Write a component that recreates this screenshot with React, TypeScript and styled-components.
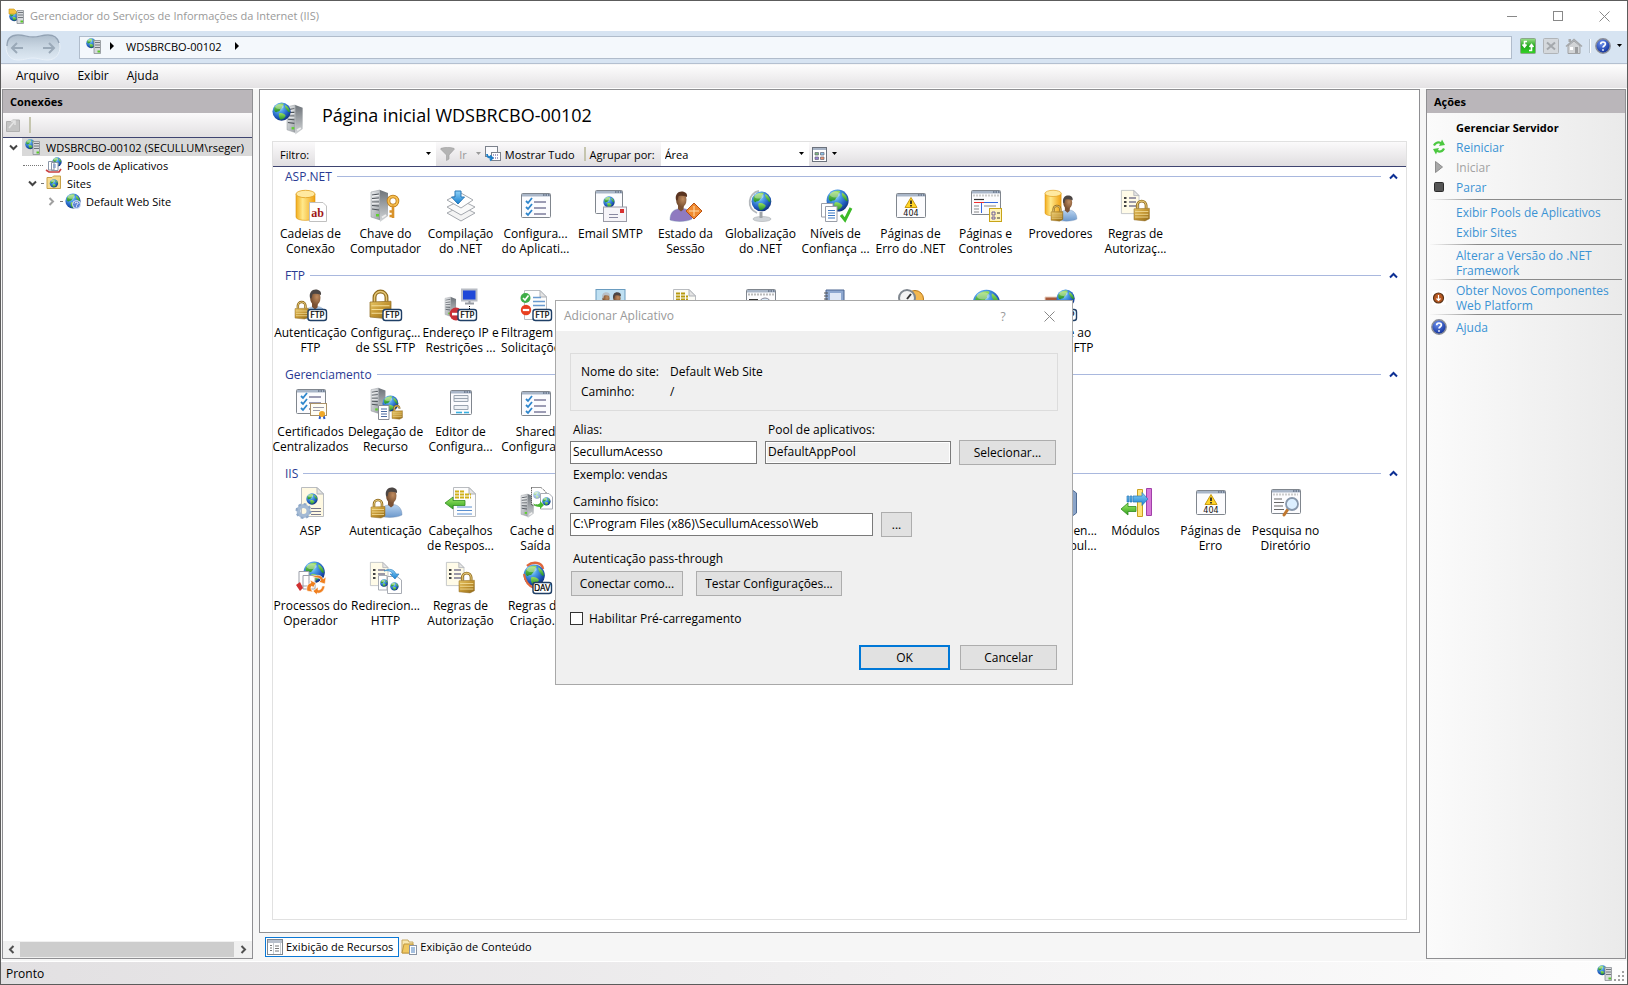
import React from "react";
import styled, { createGlobalStyle } from "styled-components";

const FONT = '"Open Sans", "Segoe UI", sans-serif';

const GlobalStyle = createGlobalStyle`
  *, *::before, *::after { box-sizing: border-box; }
  body { margin: 0; font: 12px/15px ${FONT}; color: #000; background: #f6f6f6; }
  button, input, select { font: inherit; color: inherit; border-radius: 0; margin: 0; }
  button { background: none; border: 0; padding: 0; }
  ul { list-style: none; margin: 0; padding: 0; }
  h1, h2, h3, p { margin: 0; font: inherit; }
  svg { display: block; flex: none; overflow: visible; }
`;

/* ---------- icon primitives ---------- */

const Defs = () => (
  <HiddenSvg width="0" height="0" aria-hidden="true">
    <defs>
      <radialGradient id="ocean" cx="38%" cy="28%" r="75%">
        <stop offset="0" stopColor="#b4e4ff" />
        <stop offset="0.35" stopColor="#4a9be6" />
        <stop offset="0.75" stopColor="#1c55b8" />
        <stop offset="1" stopColor="#123078" />
      </radialGradient>
      <linearGradient id="land" x1="0" y1="0" x2="0" y2="1">
        <stop offset="0" stopColor="#9be05c" />
        <stop offset="1" stopColor="#1f8f2c" />
      </linearGradient>
      <linearGradient id="steel" x1="0" y1="0" x2="1" y2="1">
        <stop offset="0" stopColor="#eceef0" />
        <stop offset="1" stopColor="#9a9fa4" />
      </linearGradient>
      <linearGradient id="steelSide" x1="0" y1="0" x2="0" y2="1">
        <stop offset="0" stopColor="#6d7379" />
        <stop offset="1" stopColor="#d4d7d9" />
      </linearGradient>
      <linearGradient id="gold" x1="0" y1="0" x2="1" y2="0">
        <stop offset="0" stopColor="#f2ad1c" />
        <stop offset="0.35" stopColor="#ffe98c" />
        <stop offset="1" stopColor="#f0a010" />
      </linearGradient>
      <linearGradient id="brass" x1="0" y1="0" x2="1" y2="1">
        <stop offset="0" stopColor="#e8c766" />
        <stop offset="0.5" stopColor="#c29430" />
        <stop offset="1" stopColor="#8f6818" />
      </linearGradient>
      <linearGradient id="blueArrow" x1="0" y1="0" x2="0" y2="1">
        <stop offset="0" stopColor="#8fd2f8" />
        <stop offset="1" stopColor="#1880d0" />
      </linearGradient>
      <linearGradient id="greenArrow" x1="0" y1="0" x2="0" y2="1">
        <stop offset="0" stopColor="#a4ec6a" />
        <stop offset="1" stopColor="#2fa01c" />
      </linearGradient>
      <radialGradient id="skin" cx="65%" cy="45%" r="70%">
        <stop offset="0" stopColor="#c08c60" />
        <stop offset="1" stopColor="#6a4428" />
      </radialGradient>
      <linearGradient id="shirt" x1="0" y1="0" x2="0" y2="1">
        <stop offset="0" stopColor="#b9d4f0" />
        <stop offset="1" stopColor="#6c98cc" />
      </linearGradient>
      <radialGradient id="help" cx="40%" cy="30%" r="70%">
        <stop offset="0" stopColor="#6d92f0" />
        <stop offset="1" stopColor="#10309a" />
      </radialGradient>
      <linearGradient id="refresh" x1="0" y1="0" x2="0" y2="1">
        <stop offset="0" stopColor="#9be08a" />
        <stop offset="0.5" stopColor="#22a81e" />
        <stop offset="1" stopColor="#35d428" />
      </linearGradient>
      <linearGradient id="nav" x1="0" y1="0" x2="0" y2="1">
        <stop offset="0" stopColor="#aebdcc" />
        <stop offset="0.5" stopColor="#cbd8e4" />
        <stop offset="1" stopColor="#dfeaf4" />
      </linearGradient>
    </defs>
  </HiddenSvg>
);

type Spot = { x?: number; y?: number; s?: number };
const at = ({ x = 0, y = 0, s = 1 }: Spot) => `translate(${x} ${y}) scale(${s})`;

const Globe = (p: Spot) => (
  <g transform={at(p)}>
    <circle cx="8" cy="8" r="7.6" fill="url(#ocean)" />
    <path d="M2.2 4.4C4 1.8 7 .9 9.6 1.4 10 2.6 8.6 3 8.2 4.2 9 5.2 7 5.6 6.6 7 5.8 8.4 4.4 7.4 3.6 8.6 2 8.4 1.4 6 2.2 4.4Z" fill="url(#land)" />
    <path d="M11 2.4C13.6 3.8 15 6 14.9 8.4 13.8 8.8 13 7.6 12.4 6.6 11.4 5.8 10.6 4 11 2.4Z" fill="url(#land)" />
    <path d="M6 9.4C8 8.8 10.4 9.8 11.4 11.4 10.8 13 9 14.6 7 14.8 6.2 13.4 5 11.4 6 9.4Z" fill="url(#land)" />
    <ellipse cx="6.2" cy="3.8" rx="3.6" ry="2" fill="#fff" opacity=".35" />
  </g>
);

const Tower = (p: Spot) => (
  <g transform={at(p)}>
    <path d="M0 2 9 0 9 30 0 27Z" fill="url(#steel)" stroke="#8b9096" strokeWidth=".5" />
    <path d="M9 0 17 3 17 26 9 32Z" fill="url(#steelSide)" />
    <path d="M1 5 8 4M1 8.500 8 8M1 12 8 12M1 15.500 8 16M1 19 8 20" stroke="#4e545a" strokeWidth="1.2" />
    <path d="M1 6.200 8 5.200M1 9.700 8 9.200M1 13.200 8 13.200" stroke="#fff" strokeWidth=".8" />
    <path d="M11 27.500 15 25" stroke="#eee" strokeWidth="2" />
    <rect x="5" y="24" width="3" height="2.500" fill="#5fd030" />
  </g>
);

const Page = ({ tint = "#fdfdfd", ...p }: Spot & { tint?: string }) => (
  <g transform={at(p)}>
    <path d="M.5.5H16L22.500 7V29.500H.5Z" fill={tint} stroke="#b9bcc0" />
    <path d="M16 .5V7H22.500Z" fill="#e4e4e4" stroke="#b0b3b8" />
  </g>
);

const Bullets = (p: Spot) => (
  <g transform={at(p)} strokeWidth="1.5">
    <path d="M0 1h2.500M0 5h2.500M0 9h2.500" stroke="#444" strokeWidth="2.200" />
    <path d="M5 1h7M5 5h7M5 9h7" stroke="#7b7890" />
  </g>
);

const Win = ({ w = 30, h = 25, ...p }: Spot & { w?: number; h?: number }) => (
  <g transform={at(p)}>
    <rect x=".5" y=".5" width={w - 1} height={h - 1} rx="1" fill="#fcfcfe" stroke="#80868e" />
    <rect x="1" y="1" width={w - 2} height="2.500" fill="#a9b6c8" />
    <path d={`M${w - 8} 2h1.500M${w - 5.5} 2h1.500M${w - 3} 2h1.500`} stroke="#3c4a60" strokeWidth="1.200" />
  </g>
);

const Padlock = ({ open, ...p }: Spot & { open?: boolean }) => (
  <g transform={at(p)}>
    <path d={open ? "M3 8V4.500a3.500 3.500 0 0 1 7 0V5" : "M3 8V5a4 4 0 0 1 8 0V8"} fill="none" stroke="#8f6a1c" strokeWidth="2.600" />
    <path d={open ? "M3 8V4.500a3.500 3.500 0 0 1 7 0V5" : "M3 8V5a4 4 0 0 1 8 0V8"} fill="none" stroke="#e6c878" strokeWidth="1" />
    <path d="M0 8 14 7.500 14 17 10 19 0 18Z" fill="url(#brass)" stroke="#94702a" strokeWidth=".5" />
    <path d="M1 10.500H13M1 13H13M1 15.500H13" stroke="#f3dd98" strokeWidth=".8" />
  </g>
);

const Person = ({ shirt = "url(#shirt)", hair = "#4c4644", ...p }: Spot & { shirt?: string; hair?: string }) => (
  <g transform={at(p)}>
    <path d="M0 29C0 21 4 18 11 17.500S22 21 22 28C17 31 5 31 0 29Z" fill={shirt} stroke="#6a86ac" strokeWidth=".4" />
    <path d="M8 13 14 13 13.500 18.500 11 20.500 8 18Z" fill="#7c5234" />
    <ellipse cx="11.300" cy="8.800" rx="5.200" ry="7.200" fill="url(#skin)" />
    <path d="M6 9C4.800 3.500 8 .5 11.500 .5 15.500 .5 17.600 2.800 17 6 14 4.600 11 4.600 8.500 5.200L7.500 9.500Z" fill={hair} />
  </g>
);

const Ftp = ({ text = "FTP" }: { text?: string }) => (
  <g>
    <rect x="13" y="20.500" width="18.500" height="11" rx="2.500" fill="#fff" stroke="#1f3f66" strokeWidth="1.400" />
    <text x="22.300" y="29.200" fontSize="8" fontWeight="400" textAnchor="middle" fontFamily="DejaVu Sans, sans-serif" fill="#000" stroke="#000" strokeWidth=".2">{text}</text>
  </g>
);

const Checks = (p: Spot) => (
  <g transform={at(p)} fill="none">
    <path d="M0 3 2 5 6 0M0 9 2 11 6 6M0 15 2 17 6 12" stroke="#2f86cc" strokeWidth="1.800" />
    <path d="M8 4H20M8 10H20M8 16H20" stroke="#7c7c9c" strokeWidth="1.300" />
  </g>
);

const WarnPage = () => (
  <g>
    <Win x={1} y={3} />
    <path d="M16 7.500 22 17.500H10Z" fill="#ffd428" stroke="#c89a10" strokeLinejoin="round" />
    <path d="M16 10.500V14M16 15V16.500" stroke="#222" strokeWidth="1.700" />
    <text x="16" y="26" fontSize="8" textAnchor="middle" fontFamily="DejaVu Sans, sans-serif" fill="#111">404</text>
  </g>
);

const Rules = () => (
  <g>
    <g transform="translate(1 0) scale(.8)"><Page tint="#fffbe8" /></g>
    <Bullets x={4} y={7} />
    <Padlock x={14} y={10} s={1.1} />
  </g>
);

const Cylinder = (p: Spot) => (
  <g transform={at(p)}>
    <path d="M0 4V27C0 31.500 19 31.500 19 27V4Z" fill="url(#gold)" stroke="#d99310" strokeWidth=".6" />
    <ellipse cx="9.500" cy="4" rx="9.500" ry="3.700" fill="#ffe9a0" stroke="#e0a020" strokeWidth=".8" />
  </g>
);

const art: Record<string, React.ReactNode> = {
  db: (
    <g>
      <Cylinder x={1} />
      <path d="M14.500 12.500H28L31.500 16V31.500H14.500Z" fill="#fff" stroke="#c0c0c0" />
      <text x="22.500" y="26.500" fontSize="12" fontWeight="700" textAnchor="middle" fontFamily="Liberation Serif, serif" fill="#a01818">ab</text>
    </g>
  ),
  key: (
    <g>
      <Tower x={1} y={0} />
      <circle cx="23" cy="11" r="4.500" fill="none" stroke="#b87818" strokeWidth="3.600" />
      <circle cx="23" cy="11" r="4.500" fill="none" stroke="#f8c050" strokeWidth="2" />
      <path d="M23 15.500V28M23 21.500h-3.500M23 26h-3.500" stroke="#d8922a" strokeWidth="2.600" />
    </g>
  ),
  compile: (
    <g stroke="#a4a8ae" strokeLinejoin="round">
      <path d="M2 23 16 16 30 23 16 31Z" fill="#f4f4f4" />
      <path d="M2 17 16 10 30 17 16 25Z" fill="#fafafa" />
      <path d="M2 10 16 3 28 10 16 18Z" fill="#fff" />
      <path d="M10 1H16V7H19.500L13 14 6.500 7H10Z" fill="url(#blueArrow)" stroke="#2878b8" />
    </g>
  ),
  checklist: <g><Win x={1} y={3} /><Checks x={6} y={8} /></g>,
  mail: (
    <g>
      <Win x={0} y={0} w={28} h={24} />
      <Globe x={8} y={6} s={0.75} />
      <rect x="8.500" y="17" width="23" height="14.500" fill="#f6f4f8" stroke="#9a9aa6" />
      <rect x="25" y="19" width="4" height="4" fill="#d83030" />
      <path d="M14 24.500h9M14 27.500h9" stroke="#8888a0" />
    </g>
  ),
  session: (
    <g>
      <Person x={0} y={1} shirt="#8f7ac0" hair="#5a3420" />
      <path d="M24 13 32 21 24 29 16 21Z" fill="#f08a30" stroke="#b85010" />
      <path d="M19 21H29M24 16V26" stroke="#ffe0b0" />
    </g>
  ),
  globeStand: (
    <g>
      <ellipse cx="17" cy="29" rx="9" ry="2.500" fill="#d0d4d8" stroke="#a8acb0" strokeWidth=".6" />
      <path d="M16 22V28" stroke="#a0a4a8" strokeWidth="3" />
      <path d="M14 1C3 3 1 18 12 23" fill="none" stroke="#b4b8bc" strokeWidth="1.800" />
      <Globe x={6} y={1} s={1.3} />
    </g>
  ),
  trust: (
    <g>
      <Globe x={6} y={-1} s={1.45} />
      <path d="M1.500 13.500H13V27H1.500Z" fill="#fff" stroke="#9a9ea8" />
      <path d="M5.500 16.500H17V31.500H5.500Z" fill="#fff" stroke="#9a9ea8" />
      <path d="M8 20.500h7M8 23h7M8 25.500h7M8 28h7" stroke="#3b78c4" />
      <path d="M21 25 25 30 31 18" fill="none" stroke="#3cba28" strokeWidth="3" />
    </g>
  ),
  error: <WarnPage />,
  controls: (
    <g>
      <Win x={1} y={0} />
      <path d="M3 5.500H29" stroke="#ccc" strokeWidth="2" strokeDasharray="2 1" />
      <path d="M4 9.500h10" stroke="#333" strokeWidth="1.200" />
      <path d="M4 12.500h10" stroke="#f03030" /><path d="M14 12.500h14M11.500 13v10" stroke="#3468e0" />
      <path d="M4 16h5M4 19h5M4 22h5M14 16h12" stroke="#888" />
      <rect x="19.500" y="18.500" width="12" height="13" fill="#fff3b8" stroke="#c8a418" />
      <path d="M22 22h3v3h-3zM22 27h3v2h-3z" fill="none" stroke="#70609a" /><path d="M27 23h3M27 28h3" stroke="#333" />
    </g>
  ),
  providers: <g><Cylinder x={0} s={0.85} /><Person x={13} y={5} s={0.86} /><Padlock x={6} y={15} s={0.85} /></g>,
  rules: <Rules />,
  authFtp: <g><Person x={9} y={0} /><Padlock x={0} y={12} s={0.95} /><Ftp /></g>,
  sslFtp: <g><Padlock x={0} y={1} s={1.5} /><Ftp /></g>,
  ipFtp: (
    <g>
      <Tower x={0} y={8} s={0.65} />
      <rect x="17" y=".5" width="14.500" height="11" fill="#2048d8" stroke="#b8bcc4" strokeWidth="2" />
      <path d="M20 14.500H29M24.500 12V14" stroke="#989ca4" strokeWidth="2" /><path d="M24.500 17V20" stroke="#000" strokeDasharray="1 1" />
      <circle cx="11" cy="25" r="6.500" fill="#c83038" /><rect x="7" y="23.800" width="7" height="2.600" fill="#fff" />
      <Ftp />
    </g>
  ),
  filterFtp: (
    <g>
      <g transform="translate(4 1)"><Page /></g>
      <path d="M13 8.500h8M13 12.500h12M13 16.500h12" stroke="#6a9ad0" strokeWidth="1.300" />
      <circle cx="5.500" cy="9" r="5" fill="#3fae48" /><path d="M3 9 5 11 8.500 6.500" fill="none" stroke="#fff" strokeWidth="1.600" />
      <circle cx="6" cy="21" r="5.200" fill="#e84020" /><rect x="2.800" y="19.900" width="6.400" height="2.200" fill="#fff" />
      <Ftp />
    </g>
  ),
  isolation: <g><rect x="1" y=".5" width="29" height="24" fill="#bfe0f2" stroke="#6a9cc0" /><Person x={3} y={3} s={0.7} shirt="#ddd" hair="#b8c0c8" /><Person x={14} y={3} s={0.7} /></g>,
  messages: <g><Page x={3} tint="#fbfbf6" /><path d="M6 4.500h9M6 7.500h12M6 10.500h12" stroke="#b89a10" strokeWidth="1.800" strokeDasharray="4 1" /></g>,
  log: <g><Win x={1} /><path d="M3 5.500H29" stroke="#bbb" strokeWidth="2" strokeDasharray="2 1" /><circle cx="20" cy="15" r="6" fill="#dcecf8" stroke="#889" /><path d="M4 11h9" stroke="#333" strokeWidth="2" /></g>,
  book: <g><path d="M6 1H24V30H6Z" fill="#8ea8d0" stroke="#4a6490" /><path d="M10 4H21V13H10Z" fill="#dfe8f6" /><path d="M4 4h4M4 7h4M4 10h4" stroke="#555" /></g>,
  sessions: <g><circle cx="20" cy="10" r="8.500" fill="#f4b850" stroke="#b87818" /><circle cx="12" cy="9" r="8" fill="#f4f4f4" stroke="#808890" strokeWidth="2" /><path d="M12 10 16 5" stroke="#333" strokeWidth="2" /></g>,
  site: <Globe x={2} y={0} s={1.8} />,
  firewall: <g><path d="M0 8H20V20H0Z" fill="#a85a3c" stroke="#e8d0c0" /><Globe x={11} y={0} s={1.2} /><Ftp /></g>,
  certs: (
    <g>
      <Win x={1} y={1} /><Checks x={6} y={5} />
      <rect x="15.500" y="15.500" width="16" height="12" fill="#fffdf4" stroke="#a89068" /><path d="M18 19.500h11M18 22.500h7" stroke="#9a9aa8" />
      <path d="M25.500 27 24.500 31M28.500 27 29.500 31" stroke="#2c5cc8" strokeWidth="2" /><circle cx="27" cy="26" r="3" fill="#f0a828" />
    </g>
  ),
  delegate: (
    <g>
      <Tower x={1} y={0} s={0.85} /><Globe x={12} y={7} s={1.05} />
      <path d="M8.500 17.500H19V31.500H8.500Z" fill="#fff" stroke="#888c94" /><path d="M11 21h6M11 23.500h6M11 26h6M11 28.500h6" stroke="#4a6aa0" />
      <Padlock open x={22} y={17} s={0.75} />
    </g>
  ),
  editor: (
    <g>
      <Win x={5} y={2} w={22} h={25} />
      <path d="M9 7.500h14v6h-14zM9 17.500h14v4h-14z" fill="#eef1f5" stroke="#9aa4b0" /><path d="M9 10.500h14" stroke="#9aa4b0" />
      <path d="M11 24.500h6" stroke="#38b0e0" strokeWidth="1.600" /><path d="M19 24.500h5" stroke="#38b0e0" strokeWidth="1.600" />
    </g>
  ),
  asp: (
    <g>
      <Page x={6} y={0} tint="#fff9e2" /><Globe x={11} y={6} s={0.75} />
      <path d="M16 21.500h10M16 24.500h10M16 27.500h10" stroke="#77778c" />
      <circle cx="8.500" cy="24" r="5" fill="none" stroke="#a4bad4" strokeWidth="4" /><circle cx="8.500" cy="24" r="7" fill="none" stroke="#8ea8c8" strokeWidth="2" strokeDasharray="2.750 2.750" />
    </g>
  ),
  auth: <g><Person x={10} y={0} /><Padlock x={1} y={12} s={1} /></g>,
  headers: (
    <g>
      <Page x={8} /><path d="M10 4.500h9M10 7.500h16M10 10.500h16" stroke="#d0b018" strokeWidth="2" strokeDasharray="4 1" /><path d="M12 20h15M12 23.500h15M12 27h15" stroke="#5a8fd0" />
      <path d="M0 16 8 10V13.500H20V18.500H8V22Z" fill="url(#greenArrow)" stroke="#2f8a20" strokeWidth=".8" />
    </g>
  ),
  cache: (
    <g>
      <Tower x={1} y={7} s={0.75} />
      <path d="M11.500 .5H21L26 5V18H11.500Z" fill="#fff" stroke="#333" strokeDasharray="1 1" /><g opacity=".45"><Globe x={13} y={4} s={0.5} /></g>
      <path d="M20.500 6.500H29L32.500 10V22H20.500Z" fill="#fff" stroke="#a8acb4" /><Globe x={22} y={10} s={0.55} />
      <path d="M13 16C15 18 18 18 20 16V14L24 18 20 22V20C17 20 14 19 13 16Z" fill="#48b830" />
    </g>
  ),
  workers: (
    <g>
      <Globe x={8} y={-1} s={1.4} />
      <path d="M4 9.500H14V24H4ZM8 13.500H20V27H8Z" fill="#fff" stroke="#9a9ea8" />
      <path d="M1 23 5 20 8 26 5 29Z" fill="#d03030" />
      <path d="M17 15C22 12 27 13 28 17L31 15 30 22 24 20 26 18C24 15 20 16 17 15ZM30 24C29 29 26 32 22 31L22 33 18 29 23 25 23 28C26 28 27 26 27 24ZM12 29C11 25 13 21 16 21L15 18 21 21 18 26 17 24C15 25 16 28 18 30Z" fill="#f08020" stroke="#fff" strokeWidth=".6" />
    </g>
  ),
  redirect: (
    <g>
      <g transform="scale(.8)"><Page tint="#fffbe8" /></g><Bullets x={3} y={7} />
      <path d="M8.500 13.500H17V28H8.500Z M17.500 14.500H27L31.500 18V31.500H17.500Z" fill="#fff" stroke="#a8acb4" />
      <Globe x={10} y={17} s={0.5} /><Globe x={20} y={20} s={0.55} />
      <path d="M14 9C19 6 24 7 26 12H29L25 17 20 12H23C21 9 18 8 14 9Z" fill="url(#blueArrow)" stroke="#2878b8" strokeWidth=".6" />
    </g>
  ),
  webdav: (
    <g>
      <path d="M7 4C13-1 22 0 23 7" fill="none" stroke="#e0683c" strokeWidth="2.500" />
      <Globe x={3} y={2} s={1.4} />
      <path d="M4 12C5 19 9 24 14 26" fill="none" stroke="#e0683c" strokeWidth="2" />
      <Ftp text="DAV" />
    </g>
  ),
  isapi: <g><path d="M6 4 26 2 31.500 6V26L26 30 6 27Z" fill="#8aa4c8" stroke="#506c94" /></g>,
  modules: (
    <g>
      <path d="M17.500 2.500H22.500V29.500H17.500Z" fill="#ffe478" stroke="#c8a020" /><path d="M26.500 1.500H31.500V28.500H26.500Z" fill="#d878d8" stroke="#a040a8" />
      <path d="M7 9h2v6h-2zM10 9h2v6h-2zM13 9H22V5.500L28 12 22 18.500V15H13Z" fill="url(#blueArrow)" stroke="#2878b8" strokeWidth=".7" />
      <path d="M1 22 8 16V19.500H16V24.500H8V28Z" fill="url(#greenArrow)" stroke="#2f8a20" strokeWidth=".8" />
    </g>
  ),
  browse: (
    <g>
      <Win x={1} y={2} />
      <path d="M3 7.500H28" stroke="#ccc" strokeWidth="2" strokeDasharray="2 1" /><path d="M4 12h8M4 15.500h10M4 19h9M4 22.500h10" stroke="#666" />
      <path d="M18 22 14 28" stroke="#c07830" strokeWidth="3" strokeLinecap="round" /><circle cx="22" cy="17" r="6" fill="#dcefff" stroke="#8898ac" strokeWidth="1.800" />
    </g>
  ),
};

const ServerSmall = ({ folder }: { folder?: boolean }) => (
  <svg width="16" height="16" viewBox="0 0 16 16" aria-hidden="true">
    <Globe s={0.65} y={folder ? 3 : 0} />
    {folder && <path d="M0 1H5L8 4 6 6H0Z" fill="#f4c440" stroke="#c89010" strokeWidth=".6" />}
    <path d="M8 2.500H14.500V15.500H8Z" fill="#d6d9dc" stroke="#8a8f94" strokeWidth=".8" />
    <path d="M9 4.500H14M9 7H14M9 9.500H14" stroke="#666c72" strokeWidth=".9" />
    <rect x="11.500" y="12.500" width="2.500" height="2" fill="#58c828" />
  </svg>
);

const HelpIcon = () => (
  <svg width="16" height="16" viewBox="0 0 16 16" aria-hidden="true">
    <circle cx="8" cy="8" r="7.200" fill="url(#help)" stroke="#8c8f98" strokeWidth="1.400" />
    <path d="M5.700 6.200C5.700 3.300 10.400 3.300 10.400 6 10.400 7.700 8 7.800 8 9.600M8 11.200V12.700" fill="none" stroke="#fff" strokeWidth="1.700" />
  </svg>
);

const Caret = () => (
  <svg width="7" height="4" viewBox="0 0 7 4" aria-hidden="true"><path d="M1 0H6L3.500 3Z" fill="currentColor" /></svg>
);
const Play = () => (
  <svg width="4" height="8" viewBox="0 0 4 8" aria-hidden="true"><path d="M0 0 4 4 0 8Z" fill="#000" /></svg>
);
const Cross = () => (
  <svg width="11" height="11" viewBox="0 0 11 11" aria-hidden="true"><path d="M.5.5 10.500 10.500M10.500.5.5 10.500" stroke="#888" /></svg>
);
const Chevron = ({ dir }: { dir: "up" | "down" | "left" | "right" }) => {
  const turn = { up: 0, right: 90, down: 180, left: 270 }[dir];
  return (
    <svg width="9" height="9" viewBox="0 0 9 9" aria-hidden="true">
      <path d="M1 6.500 4.500 3 8 6.500" transform={`rotate(${turn} 4.500 4.500)`} fill="none" stroke="currentColor" strokeWidth="2" />
    </svg>
  );
};

/* ---------- window frame ---------- */

const HiddenSvg = styled.svg`position: absolute;`;

const Frame = styled.div`
  display: flex; flex-direction: column; min-height: 100vh;
  border: 1px solid #5c5c5c; background: #f6f6f6;
`;
const TitleBar = styled.header`
  display: flex; align-items: center; height: 30px; padding-left: 8px;
  background: #fff; color: #999; font-size: 11px;
`;
const TitleText = styled.h1`flex: 1; padding: 0 0 2px 5px; white-space: nowrap;`;
const CaptionButton = styled.button`width: 46px; height: 28px; display: grid; place-items: center;`;

const NavBar = styled.nav`
  display: flex; align-items: center; height: 33px; padding: 0 4px; background: #d7e4f2;
  border-bottom: 1px solid #b4c0d0; margin-bottom: 1px;
`;
const NavButtons = styled.div`width: 74px;`;
const Address = styled.div`
  flex: 1; display: flex; align-items: center; height: 23px; padding: 0 6px 2px 6px;
  background: #f4f8fc; border: 1px solid #b0bccb; margin-right: 8px; font-size: 11px;
`;
const Crumb = styled.span`margin: 0 13px 0 12px;`;
const Spread = styled.span`margin-left: 8px; display: flex;`;
const NavTools = styled.div`display: flex; align-items: center; gap: 7px; padding-bottom: 2px;`;
const ToolLine = styled.span`width: 2px; height: 14px; background: #fff; border-left: 1px solid #b8c4d0; margin-right: -3px;`;
const IconButton = styled.button`display: flex; align-items: center; gap: 5px;`;

const MenuBar = styled.div`
  display: flex; align-items: center; gap: 18px; height: 24px; padding: 0 0 2px 15px;
  background: linear-gradient(#fdfdfd, #e4e2e4); border-bottom: 1px solid #fff;
`;

const Body = styled.main`
  flex: 1; display: grid; grid-template-columns: 251px minmax(0, 1fr) 200px; column-gap: 6px;
  padding: 0 1px 2px 1px; background: #f6f6f6;
`;
const PaneTitle = styled.h2`
  height: 23px; padding: 0 7px; line-height: 23px; font-weight: 700; font-size: 11px; background: #bab6ba;
`;

/* ---------- connections ---------- */

const SidePane = styled.section`display: flex; flex-direction: column; border: 1px solid #8f8f92; background: #fff; min-width: 0;`;
const PaneTools = styled.div`
  display: flex; align-items: center; gap: 9px; height: 25px; padding: 0 3px;
  background: linear-gradient(#fbfafb, #e2e0e2); border-bottom: 1px solid #3e4470;
`;
const PaneDivider = styled.span`width: 2px; height: 16px; background: #c5c5ae;`;
const Tree = styled.ul`flex: 1; font-size: 11px;`;
const TreeRow = styled.li<{ $level: number }>`
  display: flex; align-items: center; height: 18px; padding-left: ${(p) => p.$level * 19 + 1}px; white-space: nowrap;
`;
const Expander = styled.button<{ $dim?: boolean }>`
  width: 18px; height: 18px; display: grid; place-items: center; color: ${(p) => (p.$dim ? "#a0a0a0" : "#444")};
`;
const Dots = styled.span<{ $w: number }>`width: ${(p) => p.$w}px; height: 0; border-top: 1px dotted #777;`;
const TreeLabel = styled.button<{ $on?: boolean }>`
  flex: ${(p) => (p.$on ? "1" : "none")}; min-width: 0; display: flex; align-items: center; gap: 5px; height: 18px; padding-left: 3px;
  background: ${(p) => (p.$on ? "#d9d9d9" : "none")};
`;
const ScrollBar = styled.div`
  display: flex; align-items: center; height: 17px; padding: 0 4px; color: #505050; background: #f0f0f0;
`;
const Thumb = styled.div`flex: 1; height: 15px; margin: 0 5px 0 4px; background: #cdcdcd;`;

/* ---------- centre ---------- */

const Centre = styled.section`display: flex; flex-direction: column; min-width: 0;`;
const HomePane = styled.div`
  flex: 1; display: flex; flex-direction: column; padding: 7px 12px 12px 12px;
  border: 1px solid #8f8f92; background: #fff;
`;
const PageHead = styled.div`display: flex; align-items: center; gap: 18px; height: 42px; margin-bottom: 2px;`;
const PageTitle = styled.h2`font-size: 18px; line-height: 24px; padding-bottom: 6px;`;
const Features = styled.div`flex: 1; border: 1px solid #e1e1e1;`;
const FilterBar = styled.div`
  display: flex; align-items: center; height: 25px; padding-left: 7px; font-size: 11px;
  background: linear-gradient(#fbfafb, #e0dee0); border-bottom: 1px solid #3e4470;
`;
const Combo = styled.label<{ $w: number }>`
  display: flex; align-items: center; width: ${(p) => p.$w}px; height: 24px; padding-right: 4px; margin-left: 6px; background: #fff;
`;
const ComboInput = styled.input`flex: 1; min-width: 0; border: 0; outline: 0; background: none; padding: 0 4px;`;
const ComboSelect = styled.select`flex: 1; min-width: 0; appearance: none; border: 0; outline: 0; background: none; padding: 0 4px;`;
const BarButton = styled.button<{ $left?: number; $dim?: boolean }>`
  display: flex; align-items: center; gap: 4px; margin-left: ${(p) => p.$left ?? 0}px;
  color: ${(p) => (p.$dim ? "#9a9a9a" : "#000")}; white-space: nowrap;
`;
const BarLabel = styled.span`white-space: nowrap;`;
const BarDivider = styled(PaneDivider)`height: 14px; margin: 0 4px 0 9px;`;

const Group = styled.section`padding: 0 25px 1px 0;`;
const GroupHead = styled.header`
  display: flex; align-items: center; height: 18px; gap: 5px; padding-left: 12px; margin: 0 -17px 5px 0; color: #2a3b93;
`;
const Rule = styled.span`flex: 1; height: 1px; background: #a9b8de; margin-right: 3px;`;
const Fold = styled.button`color: #0d2f93;`;
const Tiles = styled.div`display: grid; grid-template-columns: repeat(auto-fill, 75px);`;
const TileBox = styled.button<{ $col?: number }>`
  grid-column-start: ${(p) => p.$col ?? "auto"}; display: flex; flex-direction: column; align-items: center;
  height: 75px; gap: 4px; white-space: nowrap;
`;
const TileLine = styled.span`display: block;`;

const ViewTabs = styled.div`display: flex; align-items: center; height: 26px; padding-left: 6px;`;
const ViewTab = styled.button<{ $on?: boolean }>`
  display: flex; align-items: center; gap: 3px; height: 20px; padding: 0 5px 0 1px; margin-top: 1px; font-size: 11px;
  border: 1px solid ${(p) => (p.$on ? "#0a78d6" : "transparent")}; background: ${(p) => (p.$on ? "#fff" : "none")};
`;

/* ---------- actions ---------- */

const ActionPane = styled(SidePane)`background: linear-gradient(90deg, #fbfbfb, #eaeaea);`;
const ActionList = styled.div`padding: 5px 3px 0 3px;`;
const ActionBlock = styled.div`
  padding-bottom: 1px; margin-bottom: 3px; border-bottom: 1px solid;
  border-image: linear-gradient(90deg, transparent, #8a8a8a 25%) 1;
  &:last-child { border: 0; }
`;
const ActionRow = styled.div<{ $tall?: boolean }>`
  display: grid; grid-template-columns: 18px 1fr; column-gap: 8px; align-items: center;
  justify-items: start; height: ${(p) => (p.$tall ? 30 : 20)}px; padding-bottom: 2px;
`;
const ActionLink = styled.a`color: #3b93d4; text-decoration: none;`;
const ActionOff = styled.span`color: #a2a2a2;`;
const ActionTitle = styled.h3`font-weight: 700; font-size: 11px;`;
const IconCell = styled.span`width: 18px; display: grid; place-items: center;`;

const StatusBar = styled.footer`
  display: flex; align-items: center; justify-content: space-between; height: 23px; padding: 0 2px 0 5px;
  border-top: 1px solid #fff; background: linear-gradient(90deg, #e2e0e2, #fdfdfd);
`;
const StatusIcons = styled.span`display: flex; align-items: flex-end;`;

/* ---------- dialog ---------- */

const Overlay = styled.div`position: absolute; inset: 0; display: grid; place-items: center;`;
const Dialog = styled.form`width: 518px; border: 1px solid #a8a8a8; background: #f0f0f0;`;
const DialogTitle = styled.header`
  display: flex; align-items: center; height: 30px; padding-left: 3px; background: #fff; color: #999;
`;
const DialogBody = styled.div`padding: 22px 14px 14px 14px; display: flex; flex-direction: column;`;
const SiteInfo = styled.dl`
  display: grid; grid-template-columns: 89px 1fr; row-gap: 4px; margin: 0; height: 58px; padding: 10px;
  border: 1px solid #dcdcdc;
  dt, dd { margin: 0; }
`;
const Fields = styled.div`display: grid; grid-template-columns: 187px 186px 97px; column-gap: 8px; align-items: end; margin-top: 11px;`;
const Field = styled.div`display: flex; flex-direction: column; gap: 4px; padding-bottom: 1px;`;
const FieldLabel = styled.label`padding-left: 3px;`;
const TextBox = styled.input`
  width: 100%; height: 23px; padding: 0 2px 2px 2px; border: 1px solid #7a7a7a; background: #fff; outline: 0;
  &:read-only { background: #f0f0f0; box-shadow: inset 0 0 0 1px #fff; }
`;
const Hint = styled.p`padding-left: 3px; margin-top: 2px;`;
const PathRow = styled.div`display: grid; grid-template-columns: 303px 31px; column-gap: 8px; align-items: end; margin-top: 12px;`;
const PushButton = styled.button<{ $w?: number; $main?: boolean }>`
  width: ${(p) => (p.$w ? p.$w + "px" : "100%")}; height: 25px; background: #e1e1e1;
  border: ${(p) => (p.$main ? "2px solid #0078d7" : "1px solid #adadad")};
`;
const ButtonRow = styled.div<{ $gap: number; $top: number; $end?: boolean }>`
  display: flex; gap: ${(p) => p.$gap}px; margin: ${(p) => p.$top}px 1px 0 1px; justify-content: ${(p) => (p.$end ? "flex-end" : "flex-start")};
`;
const Auth = styled(Hint)`margin-top: 14px;`;
const CheckRow = styled.label`display: flex; align-items: center; gap: 6px; margin-top: 15px;`;
const CheckBox = styled.input`appearance: none; width: 13px; height: 13px; border: 1px solid #333; background: #fff;`;

/* ---------- data ---------- */

type Tile = { icon: string; text?: string[]; col?: number };

const groups: { name: string; tiles: Tile[] }[] = [
  {
    name: "ASP.NET",
    tiles: [
      { icon: "db", text: ["Cadeias de", "Conexão"] },
      { icon: "key", text: ["Chave do", "Computador"] },
      { icon: "compile", text: ["Compilação", "do .NET"] },
      { icon: "checklist", text: ["Configura...", "do Aplicati..."] },
      { icon: "mail", text: ["Email SMTP"] },
      { icon: "session", text: ["Estado da", "Sessão"] },
      { icon: "globeStand", text: ["Globalização", "do .NET"] },
      { icon: "trust", text: ["Níveis de", "Confiança ..."] },
      { icon: "error", text: ["Páginas de", "Erro do .NET"] },
      { icon: "controls", text: ["Páginas e", "Controles"] },
      { icon: "providers", text: ["Provedores"] },
      { icon: "rules", text: ["Regras de", "Autorizaç..."] },
    ],
  },
  {
    name: "FTP",
    tiles: [
      { icon: "authFtp", text: ["Autenticação", "FTP"] },
      { icon: "sslFtp", text: ["Configuraç...", "de SSL FTP"] },
      { icon: "ipFtp", text: ["Endereço IP e", "Restrições ..."] },
      { icon: "filterFtp", text: ["Filtragem de", "Solicitaçõe..."] },
      { icon: "isolation" },
      { icon: "messages" },
      { icon: "log" },
      { icon: "book" },
      { icon: "sessions" },
      { icon: "site" },
      { icon: "firewall", text: ["Suporte ao", "Firewall FTP"] },
    ],
  },
  {
    name: "Gerenciamento",
    tiles: [
      { icon: "certs", text: ["Certificados", "Centralizados"] },
      { icon: "delegate", text: ["Delegação de", "Recurso"] },
      { icon: "editor", text: ["Editor de", "Configura..."] },
      { icon: "checklist", text: ["Shared", "Configurat..."] },
    ],
  },
  {
    name: "IIS",
    tiles: [
      { icon: "asp", text: ["ASP"] },
      { icon: "auth", text: ["Autenticação"] },
      { icon: "headers", text: ["Cabeçalhos", "de Respos..."] },
      { icon: "cache", text: ["Cache de", "Saída"] },
      { icon: "isapi", text: ["Mapeamen...", "de Manipul..."], col: 11 },
      { icon: "modules", text: ["Módulos"] },
      { icon: "error", text: ["Páginas de", "Erro"] },
      { icon: "browse", text: ["Pesquisa no", "Diretório"] },
      { icon: "workers", text: ["Processos do", "Operador"] },
      { icon: "redirect", text: ["Redirecion...", "HTTP"] },
      { icon: "rules", text: ["Regras de", "Autorização"] },
      { icon: "webdav", text: ["Regras de", "Criação..."] },
    ],
  },
];

/* ---------- sections ---------- */

const TitleArea = () => (
  <TitleBar>
    <ServerSmall folder />
    <TitleText>Gerenciador do Serviços de Informações da Internet (IIS)</TitleText>
    <CaptionButton aria-label="Minimizar">
      <svg width="10" height="10" viewBox="0 0 10 10"><path d="M0 5.500H10" stroke="#888" /></svg>
    </CaptionButton>
    <CaptionButton aria-label="Maximizar">
      <svg width="10" height="10" viewBox="0 0 10 10"><rect x=".5" y=".5" width="9" height="9" fill="none" stroke="#888" /></svg>
    </CaptionButton>
    <CaptionButton aria-label="Fechar"><Cross /></CaptionButton>
  </TitleBar>
);

const Navigation = () => (
  <NavBar>
    <NavButtons>
      <svg width="56" height="27" viewBox="0 0 56 27" aria-hidden="true">
        <path d="M13 1C20 1 22 3 28 3S36 1 43 1C51 1 55 7 55 13S51 26 43 26C36 26 34 24 28 24S20 26 13 26C5 26 1 20 1 13S5 1 13 1Z" fill="url(#nav)" stroke="#e8f0f8" />
        <path d="M2 12C2 5 6 1 13 1 20 1 22 3 28 3S36 1 43 1C50 1 53 5 54 9" fill="none" stroke="#92a2b4" strokeWidth="1.400" />
        <path d="M18 14H7M12 9 7 14 12 19M38 14H49M44 9 49 14 44 19" fill="none" stroke="#9aa9b8" strokeWidth="2" />
      </svg>
    </NavButtons>
    <Address>
      <ServerSmall />
      <Spread><Play /></Spread>
      <Crumb>WDSBRCBO-00102</Crumb>
      <Play />
    </Address>
    <NavTools>
      <IconButton aria-label="Atualizar">
        <svg width="16" height="16" viewBox="0 0 16 16">
          <rect x=".5" y=".5" width="15" height="15" rx="1" fill="url(#refresh)" stroke="#8aa88a" />
          <path d="M7 3.500H4.500V8M2.500 6.500 4.500 9 6.500 6.500M9 12.500H11.500V8M9.500 9 11.500 6.500 13.500 9" fill="none" stroke="#fff" strokeWidth="1.600" />
        </svg>
      </IconButton>
      <IconButton aria-label="Parar">
        <svg width="16" height="16" viewBox="0 0 16 16">
          <rect x=".5" y=".5" width="15" height="15" rx="1" fill="#d4d8dc" stroke="#b0b4b8" />
          <path d="M4 4.500 12 11.500M12 4.500 4 11.500" stroke="#a4a8ac" strokeWidth="2" />
        </svg>
      </IconButton>
      <IconButton aria-label="Página inicial">
        <svg width="16" height="16" viewBox="0 0 16 16">
          <path d="M2 8V15.500H14V8L8 3Z" fill="#d2d4d6" stroke="#a0a2a4" />
          <path d="M2.500 1H5V4H2.500Z" fill="#a6a8aa" /><path d="M0 8.500 8 1.500 16 8.500" fill="none" stroke="#a6a8aa" strokeWidth="1.600" />
          <rect x="9" y="9" width="3" height="6" fill="#9a9c9e" /><rect x="4" y="9" width="3" height="3" fill="#fff" />
        </svg>
      </IconButton>
      <ToolLine />
      <IconButton aria-label="Ajuda"><HelpIcon /><Caret /></IconButton>
    </NavTools>
  </NavBar>
);

const Connections = () => (
  <SidePane>
    <PaneTitle>Conexões</PaneTitle>
    <PaneTools>
      <svg width="14" height="16" viewBox="0 0 14 16" aria-hidden="true">
        <path d="M.5 4.500H5L6.500 3H13.500V14.500H.5Z" fill="#c4c4c4" stroke="#b0b0b0" /><path d="M3 11 8 5M5 4H9V8" fill="none" stroke="#e4e4e4" strokeWidth="1.500" />
      </svg>
      <PaneDivider />
    </PaneTools>
    <Tree>
      <TreeRow $level={0}>
        <Expander aria-label="Recolher"><Chevron dir="down" /></Expander>
        <TreeLabel $on><ServerSmall />WDSBRCBO-00102 (SECULLUM\rseger)</TreeLabel>
      </TreeRow>
      <TreeRow $level={1}>
        <Dots $w={20} />
        <TreeLabel>
          <svg width="16" height="16" viewBox="0 0 16 16" aria-hidden="true">
            <Globe x={6} s={0.62} /><path d="M2.500 4.500H8V13H2.500ZM5.500 5.500H12V13.500H5.500Z" fill="#fff" stroke="#8a96a8" />
            <path d="M7 8h3M7 10h3" stroke="#6a8ac0" /><path d="M0 13 3 15H13L15 12" fill="none" stroke="#c84040" strokeWidth="1.600" />
          </svg>
          Pools de Aplicativos
        </TreeLabel>
      </TreeRow>
      <TreeRow $level={1}>
        <Expander aria-label="Recolher"><Chevron dir="down" /></Expander>
        <Dots $w={2} />
        <TreeLabel>
          <svg width="16" height="16" viewBox="0 0 16 16" aria-hidden="true">
            <path d="M1 2.500H6L7.500 1H14.500V13.500H1Z" fill="#f6dc90" stroke="#c8a24a" /><Globe x={3.5} y={4} s={0.55} />
          </svg>
          Sites
        </TreeLabel>
      </TreeRow>
      <TreeRow $level={2}>
        <Expander $dim aria-label="Expandir"><Chevron dir="right" /></Expander>
        <Dots $w={2} />
        <TreeLabel>
          <svg width="16" height="16" viewBox="0 0 16 16" aria-hidden="true">
            <Globe /><circle cx="11.500" cy="11.500" r="4" fill="#5d83d4" stroke="#dde8fa" />
            <path d="M10 10.500C10 8.800 13 8.800 13 10.500 13 11.500 11.500 11.300 11.500 12.500M11.500 13.300V14.300" fill="none" stroke="#fff" />
          </svg>
          Default Web Site
        </TreeLabel>
      </TreeRow>
    </Tree>
    <ScrollBar><Chevron dir="left" /><Thumb /><Chevron dir="right" /></ScrollBar>
  </SidePane>
);

const Filter = () => (
  <FilterBar>
    <BarLabel as="label" htmlFor="filter">Filtro:</BarLabel>
    <Combo $w={121}><ComboInput id="filter" /><Caret /></Combo>
    <BarButton $left={4} $dim>
      <svg width="15" height="14" viewBox="0 0 15 14" aria-hidden="true"><path d="M.5 2C.5 0 14.500 0 14.500 2L9 8V12L6.500 13.500V8Z" fill="#b4b4b4" stroke="#9a9a9a" strokeWidth=".6" /></svg>
      Ir
    </BarButton>
    <BarButton $left={8} $dim aria-label="Opções do filtro"><Caret /></BarButton>
    <BarButton $left={3}>
      <svg width="16" height="16" viewBox="0 0 16 16" aria-hidden="true">
        <rect x=".5" y=".5" width="12" height="10" fill="#fbfbfd" stroke="#7c828c" /><rect x="6.500" y="6.500" width="9" height="8" fill="#fff" stroke="#7c828c" />
        <path d="M8 9h6M8 12h6" stroke="#8880b0" strokeDasharray="1 1" strokeWidth="1.500" /><path d="M2 8C2 11 4 12 7 12M5 9.500 7.500 12 5 14.500" fill="none" stroke="#1f80c8" strokeWidth="1.800" />
      </svg>
      Mostrar Tudo
    </BarButton>
    <BarDivider />
    <BarLabel as="label" htmlFor="groupBy">Agrupar por:</BarLabel>
    <Combo $w={148}>
      <ComboSelect id="groupBy"><option>Área</option></ComboSelect>
      <Caret />
    </Combo>
    <BarButton $left={3} aria-label="Modo de exibição">
      <svg width="15" height="15" viewBox="0 0 15 15" aria-hidden="true">
        <rect x=".5" y=".5" width="14" height="14" fill="#fff" stroke="#6c727c" /><rect x="1" y="1" width="13" height="2" fill="#a8b4c6" />
        <path d="M3 5.500h3.500v2.500H3z" fill="#7cb87c" stroke="#667" strokeWidth=".7" /><path d="M8.500 5.500H12v2.500H8.500z" fill="#8cc4e8" stroke="#667" strokeWidth=".7" />
        <path d="M3 10h3.500v2.500H3z" fill="#9a80d8" stroke="#667" strokeWidth=".7" /><path d="M8.500 10H12v2.500H8.500z" fill="#f0946c" stroke="#667" strokeWidth=".7" />
      </svg>
      <Caret />
    </BarButton>
  </FilterBar>
);

const FeatureTile = ({ icon, text = [], col }: Tile) => (
  <TileBox $col={col}>
    <svg width="32" height="32" viewBox="0 0 32 32" aria-hidden="true">{art[icon]}</svg>
    <span>{text.map((line) => <TileLine key={line}>{line}</TileLine>)}</span>
  </TileBox>
);

const Home = () => (
  <Centre>
    <HomePane>
      <PageHead>
        <svg width="32" height="32" viewBox="0 0 32 32" aria-hidden="true"><Tower x={15} y={3} s={0.92} /><Globe s={1.2} /></svg>
        <PageTitle>Página inicial WDSBRCBO-00102</PageTitle>
      </PageHead>
      <Features>
        <Filter />
        {groups.map((g) => (
          <Group key={g.name}>
            <GroupHead>
              <h3>{g.name}</h3>
              <Rule />
              <Fold aria-label={g.name}><Chevron dir="up" /></Fold>
            </GroupHead>
            <Tiles>{g.tiles.map((t, i) => <FeatureTile key={i} {...t} />)}</Tiles>
          </Group>
        ))}
      </Features>
    </HomePane>
    <ViewTabs>
      <ViewTab $on>
        <svg width="16" height="16" viewBox="0 0 16 16" aria-hidden="true">
          <rect x=".5" y=".5" width="15" height="15" fill="#fff" stroke="#80868e" /><rect x="1" y="1" width="14" height="3" fill="#b8c0cc" />
          <path d="M3 6.500h2M3 9h2M3 11.500h2M8 7h4M8 9.500h4M8 12h4" stroke="#777" /><path d="M6.500 4V15M13.500 4V15" stroke="#c8ccd0" />
        </svg>
        Exibição de Recursos
      </ViewTab>
      <ViewTab>
        <svg width="16" height="16" viewBox="0 0 16 16" aria-hidden="true">
          <path d="M1 1H7L8 3H12V14H1Z" fill="#f8e8b0" stroke="#c8a860" /><path d="M3 5H12V14H1Z" fill="#f0c860" stroke="#c09840" />
          <rect x="8.500" y="6.500" width="7" height="9" fill="#fff" stroke="#8a94a4" /><path d="M10 9h4M10 11h4M10 13h4" stroke="#4a80c0" />
        </svg>
        Exibição de Conteúdo
      </ViewTab>
    </ViewTabs>
  </Centre>
);

const Actions = () => (
  <ActionPane>
    <PaneTitle>Ações</PaneTitle>
    <ActionList>
      <ActionBlock>
        <ActionRow><IconCell /><ActionTitle>Gerenciar Servidor</ActionTitle></ActionRow>
        <ActionRow>
          <IconCell>
            <svg width="12" height="16" viewBox="0 0 12 16" aria-hidden="true">
              <path d="M0 6C2 2 6 1.500 8 3L9 .5 12 6 6 7 7 5C5 4 3 5 2 7ZM12 10C10 14 6 14.500 4 13L3 15.500 0 10 6 9 5 11C7 12 9 11 10 9Z" fill="#4cc840" />
            </svg>
          </IconCell>
          <ActionLink href="#">Reiniciar</ActionLink>
        </ActionRow>
        <ActionRow>
          <IconCell><svg width="8" height="12" viewBox="0 0 8 12" aria-hidden="true"><path d="M.5.5 7.500 6 .5 11.500Z" fill="#a8a8a8" stroke="#8c8c8c" /></svg></IconCell>
          <ActionOff>Iniciar</ActionOff>
        </ActionRow>
        <ActionRow>
          <IconCell><svg width="10" height="10" viewBox="0 0 10 10" aria-hidden="true"><rect x=".5" y=".5" width="9" height="9" rx="1" fill="#555" stroke="#2c2c2c" /></svg></IconCell>
          <ActionLink href="#">Parar</ActionLink>
        </ActionRow>
      </ActionBlock>
      <ActionBlock>
        <ActionRow><IconCell /><ActionLink href="#">Exibir Pools de Aplicativos</ActionLink></ActionRow>
        <ActionRow><IconCell /><ActionLink href="#">Exibir Sites</ActionLink></ActionRow>
      </ActionBlock>
      <ActionBlock>
        <ActionRow $tall><IconCell /><ActionLink href="#">Alterar a Versão do .NET<br />Framework</ActionLink></ActionRow>
      </ActionBlock>
      <ActionBlock>
        <ActionRow $tall>
          <IconCell>
            <svg width="14" height="14" viewBox="0 0 14 14" aria-hidden="true">
              <rect width="14" height="14" fill="#fff" /><circle cx="6.500" cy="7" r="5" fill="#b85820" stroke="#5c3418" strokeWidth="1.200" /><path d="M6.500 4V9M4.500 7.500 6.500 9.500 8.500 7.500" fill="none" stroke="#fff" strokeWidth="1.200" />
            </svg>
          </IconCell>
          <ActionLink href="#">Obter Novos Componentes<br />Web Platform</ActionLink>
        </ActionRow>
      </ActionBlock>
      <ActionBlock>
        <ActionRow><IconCell><HelpIcon /></IconCell><ActionLink href="#">Ajuda</ActionLink></ActionRow>
      </ActionBlock>
    </ActionList>
  </ActionPane>
);

const AddApplication = () => (
  <Overlay>
    <Dialog onSubmit={(e) => e.preventDefault()} aria-label="Adicionar Aplicativo">
      <DialogTitle>
        <TitleText as="h2">Adicionar Aplicativo</TitleText>
        <CaptionButton type="button" aria-label="Ajuda">?</CaptionButton>
        <CaptionButton type="button" aria-label="Fechar"><Cross /></CaptionButton>
      </DialogTitle>
      <DialogBody>
        <SiteInfo>
          <dt>Nome do site:</dt><dd>Default Web Site</dd>
          <dt>Caminho:</dt><dd>/</dd>
        </SiteInfo>
        <Fields>
          <Field>
            <FieldLabel htmlFor="alias">Alias:</FieldLabel>
            <TextBox id="alias" defaultValue="SecullumAcesso" />
          </Field>
          <Field>
            <FieldLabel htmlFor="pool">Pool de aplicativos:</FieldLabel>
            <TextBox id="pool" readOnly defaultValue="DefaultAppPool" />
          </Field>
          <PushButton type="button">Selecionar...</PushButton>
        </Fields>
        <Hint>Exemplo: vendas</Hint>
        <PathRow>
          <Field>
            <FieldLabel htmlFor="path">Caminho físico:</FieldLabel>
            <TextBox id="path" defaultValue="C:\Program Files (x86)\SecullumAcesso\Web" />
          </Field>
          <PushButton type="button">...</PushButton>
        </PathRow>
        <Auth>Autenticação pass-through</Auth>
        <ButtonRow $gap={13} $top={5}>
          <PushButton type="button" $w={112}>Conectar como...</PushButton>
          <PushButton type="button" $w={146}>Testar Configurações...</PushButton>
        </ButtonRow>
        <CheckRow><CheckBox type="checkbox" />Habilitar Pré-carregamento</CheckRow>
        <ButtonRow $gap={10} $top={19} $end>
          <PushButton $w={91} $main>OK</PushButton>
          <PushButton type="button" $w={97}>Cancelar</PushButton>
        </ButtonRow>
      </DialogBody>
    </Dialog>
  </Overlay>
);

export default function App() {
  return (
    <>
      <GlobalStyle />
      <Defs />
      <Frame>
        <TitleArea />
        <Navigation />
        <MenuBar><button>Arquivo</button><button>Exibir</button><button>Ajuda</button></MenuBar>
        <Body>
          <Connections />
          <Home />
          <Actions />
        </Body>
        <StatusBar>
          Pronto
          <StatusIcons>
            <ServerSmall />
            <svg width="12" height="12" viewBox="0 0 12 12" aria-hidden="true">
              <path d="M9 2h2v2h-2zM5 6h2v2h-2zM9 6h2v2h-2zM1 10h2v2h-2zM5 10h2v2h-2zM9 10h2v2h-2z" fill="#a0a0a0" />
            </svg>
          </StatusIcons>
        </StatusBar>
      </Frame>
      <AddApplication />
    </>
  );
}
